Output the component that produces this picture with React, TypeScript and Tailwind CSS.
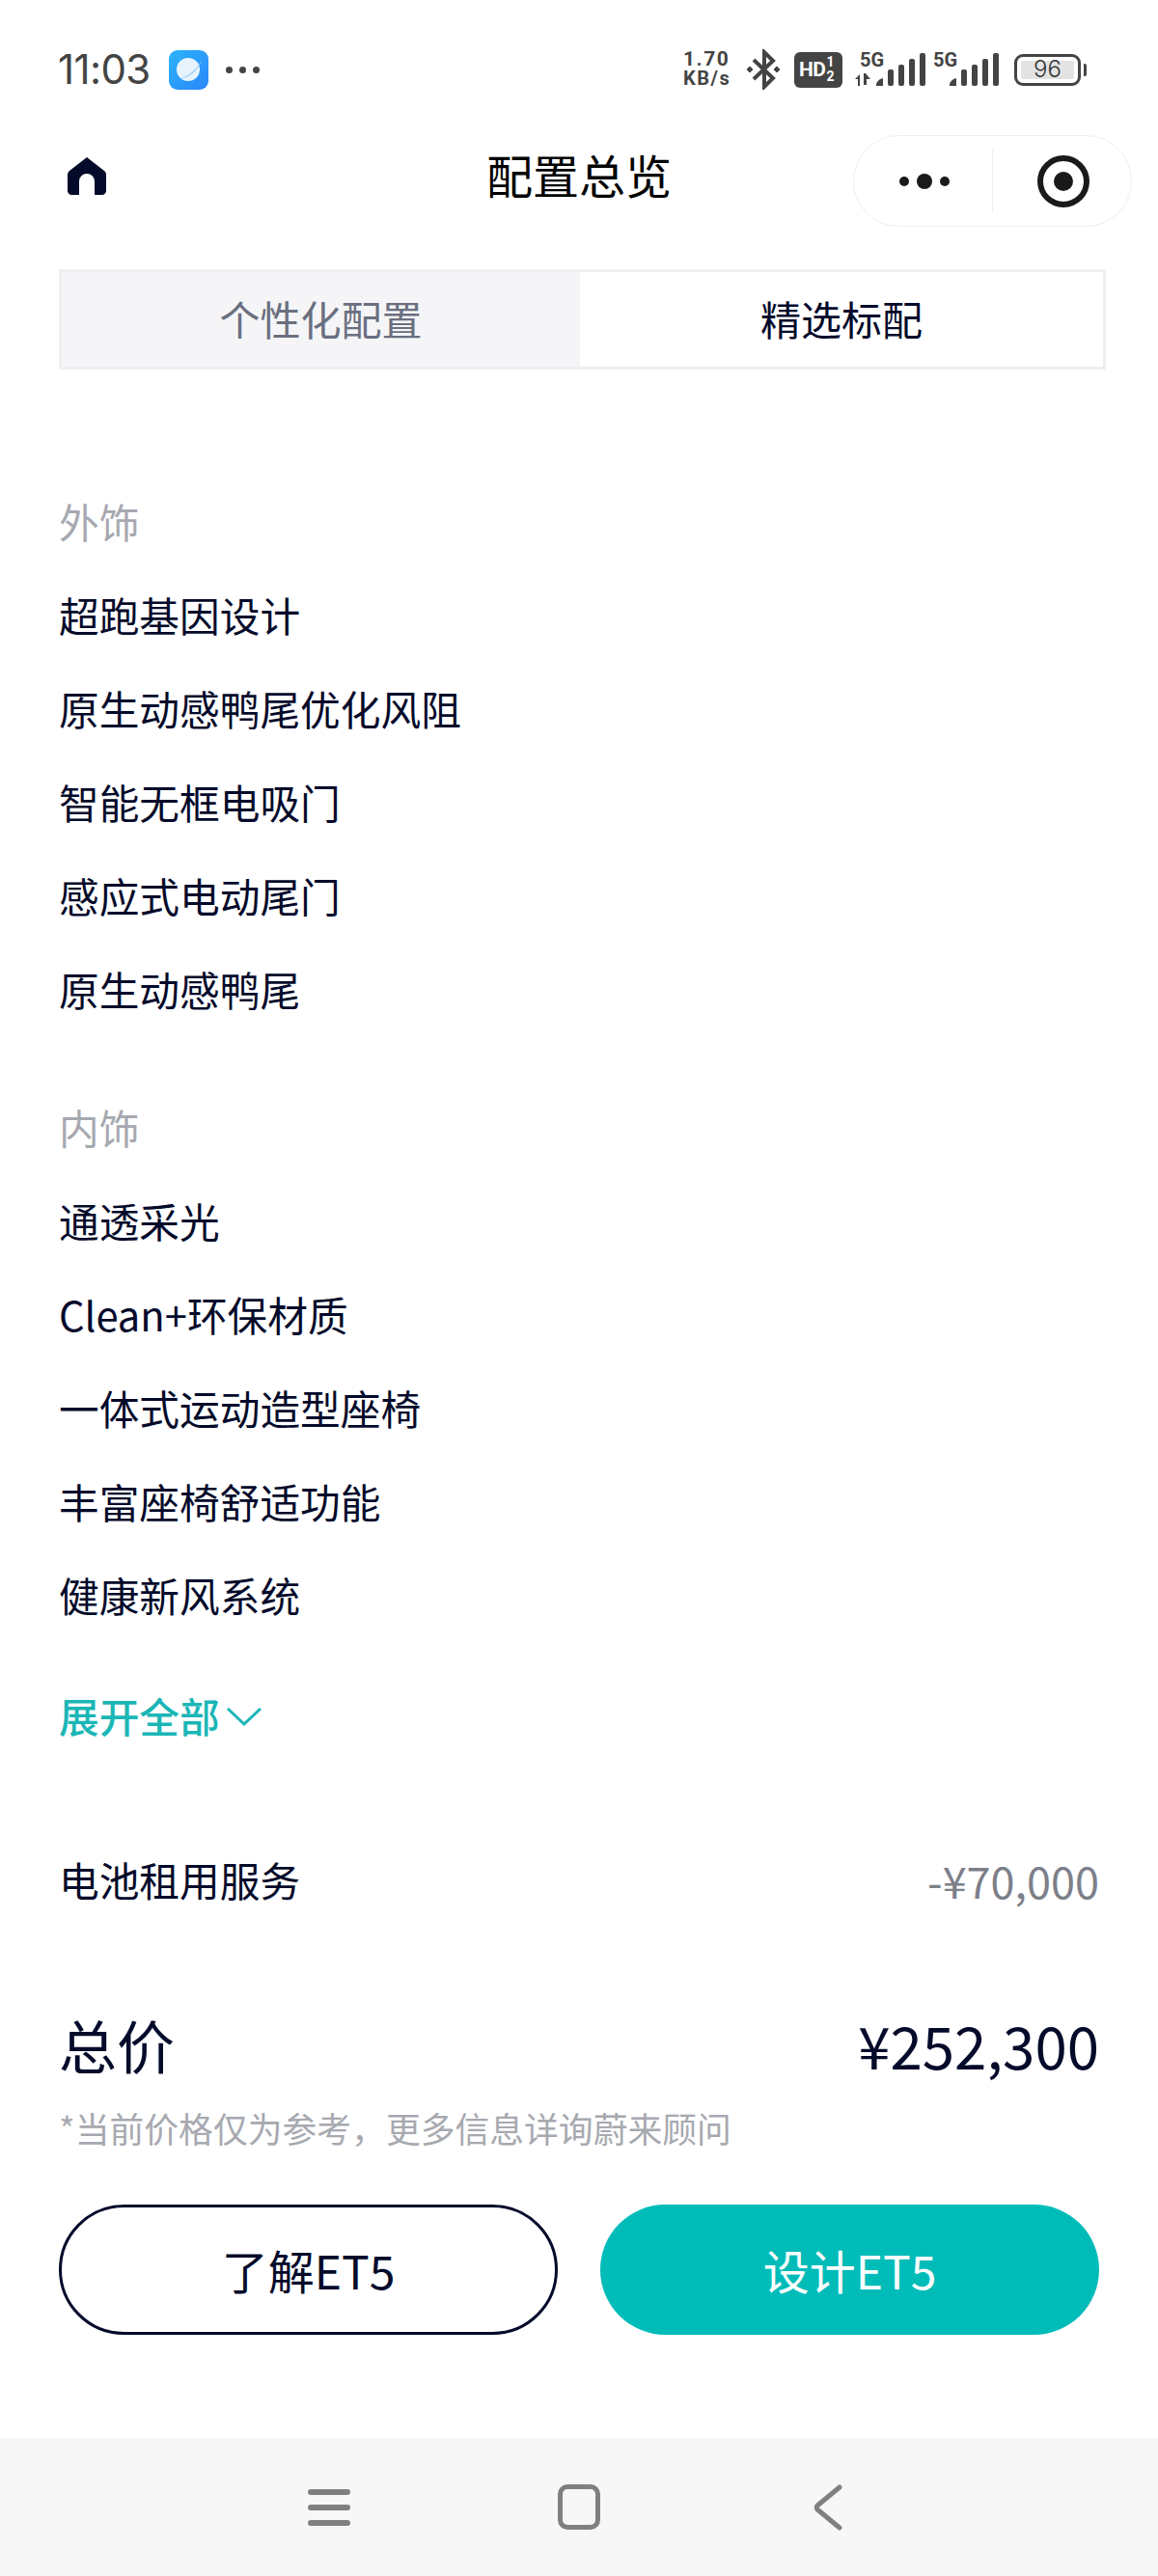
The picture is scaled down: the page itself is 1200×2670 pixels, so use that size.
const font = "font-['Noto_Sans_CJK_SC','Noto_Sans',sans-serif]";

const exterior = ["超跑基因设计", "原生动感鸭尾优化风阻", "智能无框电吸门", "感应式电动尾门", "原生动感鸭尾"];
const interior = ["通透采光", "Clean+环保材质", "一体式运动造型座椅", "丰富座椅舒适功能", "健康新风系统"];

function Signal({ arrows }: { arrows?: boolean }) {
  return (
    <div className={`relative h-[36px] ${arrows ? "w-[73px]" : "w-[68px]"}`}>
      <span className={`absolute top-[-3px] text-[20px] leading-[22px] font-bold text-[#444] font-['Roboto',sans-serif] ${arrows ? "left-[5px]" : "left-0"}`}>
        5G
      </span>
      <svg className="absolute left-0 top-0" width="73" height="36" viewBox="0 0 73 36" fill="#444">
        {arrows && (
          <>
            <path d="M0 28l5-5v12h-2v-7z" />
            <path d="M9 22h2l5 6h-4v6H9z" />
          </>
        )}
        <path d={arrows ? "M22 34c0-3 3-6 7-7v8h-7z" : "M17 34c0-3 3-6 7-7v8h-7z"} />
        <rect x={arrows ? 34 : 29} y="18" width="6" height="17" rx="2" />
        <rect x={arrows ? 45 : 40} y="13" width="6" height="22" rx="2" />
        <rect x={arrows ? 56 : 51} y="7" width="6" height="28" rx="2" />
        <rect x={arrows ? 67 : 62} y="1" width="6" height="34" rx="2" />
      </svg>
    </div>
  );
}

function StatusBar() {
  return (
    <div className="flex h-[140px] items-center justify-between pl-[60px] pr-[74px] pt-[4px]">
      <div className="flex items-center">
        <span className="w-[94px] text-[42px] leading-none text-[#444] font-['Inter',sans-serif] tracking-[-0.6px]">11:03</span>
        <svg className="ml-[21px]" width="41" height="41" viewBox="0 0 41 41">
          <defs>
            <linearGradient id="appBg" x1="0" y1="0" x2="1" y2="1">
              <stop offset="0" stopColor="#2cb4fb" />
              <stop offset="1" stopColor="#2a86fa" />
            </linearGradient>
          </defs>
          <rect width="41" height="41" rx="9" fill="url(#appBg)" />
          <circle cx="20" cy="20" r="12" fill="#e8f4fd" />
          <path d="M8 30c8 0 20-8 26-20-3 10-12 20-26 20z" fill="#9fd2f8" />
        </svg>
        <div className="ml-[18px] flex gap-[7px]">
          <span className="size-[7px] rounded-full bg-[#444]" />
          <span className="size-[7px] rounded-full bg-[#444]" />
          <span className="size-[7px] rounded-full bg-[#444]" />
        </div>
      </div>
      <div className="flex items-center">
        <div className="flex w-[54px] flex-col text-[#444] font-['Roboto',sans-serif] font-bold">
          <span className="text-[21px] leading-[19px] tracking-[1.5px]">1.70</span>
          <span className="text-[20px] leading-[21px] tracking-[1.5px]">KB/s</span>
        </div>
        <svg className="ml-[10px]" width="38" height="42" viewBox="0 0 38 42" fill="none" stroke="#444" strokeWidth="4">
          <path d="M9 11l20 19-9 9V3l9 9-20 19" />
          <path d="M2 21l3-3 3 3-3 3z M30 21l3-3 3 3-3 3z" fill="#444" strokeWidth="1" />
        </svg>
        <div className="ml-[13px] flex h-[37px] w-[50px] items-center rounded-[6px] bg-[#444] pl-[5px] text-white font-['Roboto',sans-serif] font-bold">
          <span className="text-[21px] leading-none tracking-[-0.5px]">HD</span>
          <span className="ml-[1px] flex flex-col text-center text-[14px] leading-[15px]">
            <span>1</span>
            <span>2</span>
          </span>
        </div>
        <div className="ml-[13px]">
          <Signal arrows />
        </div>
        <div className="ml-[8px]">
          <Signal />
        </div>
        <div className="ml-[16px] flex items-center">
          <div className="flex h-[33px] w-[69px] items-center rounded-[9px] border-[3px] border-[#444] p-[4px]">
            <div className="flex h-full w-full items-center justify-center rounded-[2px] bg-[#e3e3e3] text-[24px] font-light leading-none text-[#333] font-['Inter',sans-serif]">
              96
            </div>
          </div>
          <div className="ml-[3px] h-[13px] w-[3px] rounded-r-[2px] bg-[#444]" />
        </div>
      </div>
    </div>
  );
}

function NavBar() {
  return (
    <div className="grid h-[95px] grid-cols-[1fr_auto_1fr] items-center px-[27px]">
      <svg className="mb-[12px] ml-[43px]" width="40" height="40" viewBox="0 0 40 40" fill="#040a2a">
        <path
          fillRule="evenodd"
          d="M20 1L38 15c1 1 2 2 2 4v17c0 2-2 4-4 4h-8V26a8 8 0 0 0-16 0v14H4c-2 0-4-2-4-4V19c0-2 1-3 2-4z"
        />
      </svg>
      <div className="pb-[16px] text-[48px] leading-none text-black">配置总览</div>
      <div className="flex h-[95px] w-[289px] items-center justify-self-end rounded-full border border-[#eeeeee]">
        <div className="flex w-[143px] items-center justify-center gap-[8px] pl-[2px]">
          <span className="size-[10px] rounded-full bg-[#1a1a1a]" />
          <span className="size-[16px] rounded-full bg-[#1a1a1a]" />
          <span className="size-[10px] rounded-full bg-[#1a1a1a]" />
        </div>
        <div className="h-[65px] w-px bg-[#eeeeee]" />
        <div className="flex flex-1 items-center justify-center pl-[3px]">
          <div className="flex size-[54px] items-center justify-center rounded-full border-[6px] border-[#1a1a1a]">
            <span className="size-[20px] rounded-full bg-[#1a1a1a]" />
          </div>
        </div>
      </div>
    </div>
  );
}

function Tabs() {
  return (
    <div className="mx-[61px] mt-[44px] flex h-[104px] w-[1085px] border-[3px] border-[#eeeff1] text-[42px]">
      <div className="flex w-[537px] items-center justify-center bg-[#f5f5f7] pb-[3px] text-[#6a6f80]">个性化配置</div>
      <div className="flex flex-1 items-center justify-center bg-white pb-[3px] text-[#040a2a]">精选标配</div>
    </div>
  );
}

function Group({ title, items }: { title: string; items: string[] }) {
  return (
    <div>
      <div className="flex h-[97px] items-center text-[#a7a9b0]">{title}</div>
      {items.map((item) => (
        <div key={item} className="flex h-[97px] items-center text-[#040a2a]">
          {item}
        </div>
      ))}
    </div>
  );
}

function Buttons() {
  return (
    <div className="mt-[54px] flex justify-between text-[48px]">
      <button className="flex h-[135px] w-[517px] items-center justify-center rounded-full border-[3px] border-[#040a2a] pb-[2px] text-[#040a2a]">
        了解ET5
      </button>
      <button className="flex h-[135px] w-[517px] items-center justify-center rounded-full bg-[#00bcb9] pb-[2px] text-white">
        设计ET5
      </button>
    </div>
  );
}

function BottomBar() {
  return (
    <div className="mt-auto flex h-[143px] items-center bg-[#f7f7f7] pl-[319px]">
      <div className="flex w-[44px] flex-col gap-[10px]">
        <span className="h-[6px] rounded-full bg-[#808080]" />
        <span className="h-[6px] rounded-full bg-[#808080]" />
        <span className="h-[6px] rounded-full bg-[#808080]" />
      </div>
      <div className="ml-[215px] h-[47px] w-[44px] rounded-[10px] border-[5px] border-[#808080]" />
      <svg className="ml-[221px]" width="30" height="48" viewBox="0 0 30 48" fill="none" stroke="#808080" strokeWidth="5" strokeLinecap="round" strokeLinejoin="round">
        <path d="M27 3L4 22c-1 1-1 3 0 4l23 19" />
      </svg>
    </div>
  );
}

export default function App() {
  return (
    <div className={`flex h-[2670px] w-[1200px] flex-col bg-white ${font}`}>
      <StatusBar />
      <NavBar />
      <Tabs />
      <div className="flex flex-1 flex-col">
        <div className="px-[61px] text-[41.7px]">
          <div className="mt-[109px]">
            <Group title="外饰" items={exterior} />
          </div>
          <div className="mt-[46px]">
            <Group title="内饰" items={interior} />
          </div>
          <div className="mt-[28px] flex h-[97px] items-center font-medium text-[#1bb6b6]">
            展开全部
            <svg className="ml-[6px]" width="38" height="22" viewBox="0 0 38 22" fill="none" stroke="#1bb6b6" strokeWidth="3">
              <path d="M2 3l17 16L36 3" />
            </svg>
          </div>
          <div className="mt-[73px] flex h-[97px] items-center justify-between text-[#040a2a]">
            <span>电池租用服务</span>
            <span className="text-[45px] text-[#7d7f8a]">-¥70,000</span>
          </div>
          <div className="mt-[82px] flex h-[80px] items-center justify-between text-[60px] text-[#040a2a]">
            <span>总价</span>
            <span>¥252,300</span>
          </div>
          <div className="mt-[22px] flex h-[50px] items-center text-[35.8px] text-[#a7a9b0]">
            *当前价格仅为参考，更多信息详询蔚来顾问
          </div>
          <Buttons />
        </div>
        <BottomBar />
      </div>
    </div>
  );
}
